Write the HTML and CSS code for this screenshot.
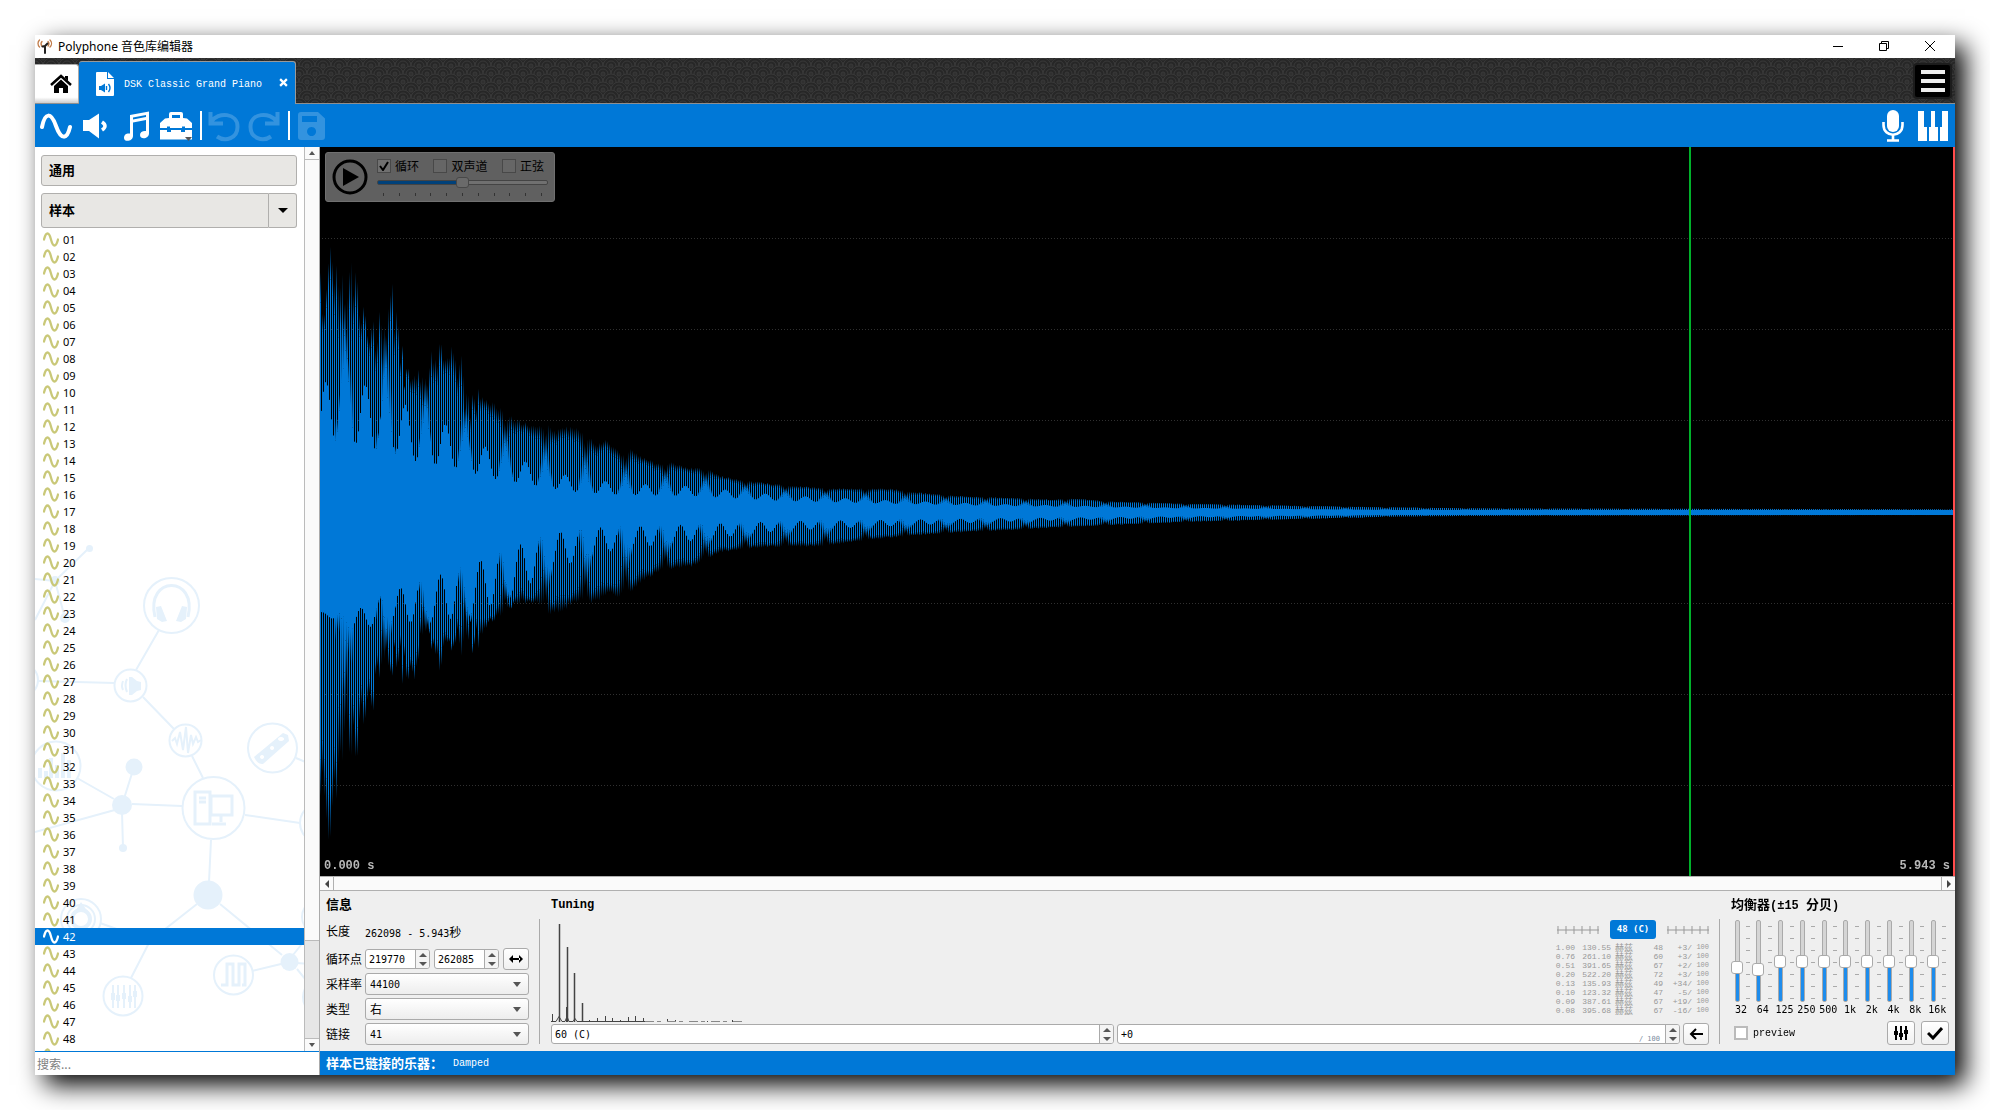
FILE: index.html
```html
<!DOCTYPE html>
<html lang="zh-CN">
<head>
<meta charset="utf-8">
<title>Polyphone 音色库编辑器</title>
<link rel="stylesheet" href="styles.css">
</head>
<body>
<div class="window">
  <header class="titlebar">
    <svg class="app-icon" viewBox="0 0 16 15" fill="none" stroke-linecap="round">
      <path d="M2.500 1C.5 3 .5 6 2.500 8M5 2.500C3.700 4 3.700 5.500 4.800 7M13 1c2 2 2 5 0 7M11 2.500c1.300 1.500 1.300 3 .1 4.500" stroke="#c07b48" stroke-width="1.300"/>
      <path d="M5.500 7.500 8 7l2.500-2.500M8 7v7" stroke="#222" stroke-width="2"/>
    </svg>
    <h1>Polyphone <span class="cjk">音色库编辑器</span></h1>
    <div class="window-buttons">
      <button aria-label="最小化"><svg viewBox="0 0 12 12"><path d="M1 6.500h10"/></svg></button>
      <button aria-label="还原"><svg viewBox="0 0 12 12"><path d="M1.500 3.500h7v7h-7zM3.500 3.500v-2h7v7h-2"/></svg></button>
      <button aria-label="关闭"><svg viewBox="0 0 12 12"><path d="M1 1l10 10M11 1 1 11"/></svg></button>
    </div>
  </header>

  <nav class="tabs">
    <svg class="tabs-pattern" aria-hidden="true">
      <defs>
        <g id="scale" fill="#272727" stroke="#383838"><circle r="8"/><circle r="5"/><circle r="2" fill="#303030"/></g>
        <pattern id="waves" width="16" height="16" patternUnits="userSpaceOnUse">
          <rect width="16" height="16" fill="#272727"/>
          <use href="#scale" x="8"/><use href="#scale" y="8"/><use href="#scale" x="16" y="8"/>
          <use href="#scale" x="8" y="16"/><use href="#scale" y="24"/><use href="#scale" x="16" y="24"/>
        </pattern>
      </defs>
      <rect width="100%" height="100%" fill="url(#waves)"/>
    </svg>
    <button class="tab-home" aria-label="主页">
      <svg viewBox="0 0 22 20"><path d="M1 11 11 2l10 9" fill="none" stroke="#000" stroke-width="2.500"/><path d="M15 2h3v5l-3-3zM4 12l7-6.500 7 6.500v7h-5v-5H9v5H4z"/></svg>
    </button>
    <div class="tab-file">
      <svg class="file-icon" viewBox="0 0 18 24"><path fill="#fff" d="M1 0h10v7h7v16a1 1 0 0 1-1 1H1a1 1 0 0 1-1-1V1a1 1 0 0 1 1-1zM12 0l6 6h-6z"/><path fill="#0078d7" d="M3 14h2l4-2.500v9L5 18H3z"/><path d="M10.500 14v4M12.500 12q3 4 0 8" fill="none" stroke="#0078d7" stroke-width="1.400"/></svg>
      <span>DSK Classic Grand Piano</span>
      <button class="tab-close" aria-label="关闭标签"><svg viewBox="0 0 8 8"><path d="M1 1l6 6M7 1 1 7" stroke="#fff" stroke-width="2"/></svg></button>
    </div>
    <button class="menu" aria-label="菜单"><svg viewBox="0 0 24 22"><path d="M0 2h24M0 11h24M0 20h24" stroke="#eee" stroke-width="4"/></svg></button>
  </nav>

  <div class="toolbar">
    <button aria-label="新建样本"><svg viewBox="0 0 32 32"><path d="M2 17C5 2 11 2 16 16s11 14 14 1" fill="none" stroke="#fff" stroke-width="4" stroke-linecap="round"/></svg></button>
    <button aria-label="新建乐器"><svg viewBox="0 0 32 32"><path fill="#fff" d="M3 10h6l10-6.500v25L9 21H3z"/><path d="M22 12q6 4 0 8" fill="none" stroke="#fff" stroke-width="3.500"/></svg></button>
    <button aria-label="新建预设"><svg viewBox="0 0 32 32"><path fill="#fff" fill-rule="evenodd" d="M10 5 29 1.500v22c0 5.500-9 6.500-9 1.500 0-3 3-4.500 6-4V10l-13 2.500V26c0 5.500-9 6.500-9 2 0-4 3-5 6-4.500zM13 7.500v2L26 7V5z"/></svg></button>
    <button aria-label="工具箱"><svg viewBox="0 0 32 32"><path fill="#fff" fill-rule="evenodd" d="M9 8V4q0-2 2-2h10q2 0 2 2v4l4 .5 5 4.500v5H0v-5L5 8.500zM12 8h8V5h-8zM0 20h7v2h4v-2h10v2h4v-2h7v9.500H0z"/><path d="M7 16.500h3V22H7zM22 16.500h3V22h-3z" fill="#0078d7"/><path d="M25 27h7l-3.500 4z" fill="#555"/></svg></button>
    <span class="tool-sep"></span>
    <button aria-label="撤销" disabled><svg viewBox="0 0 32 32"><path d="M2.500 2v11.500H15M3 12C10 1 30 3 29.500 17c0 11-12 15.500-20.500 9.500" fill="none" stroke="#3393df" stroke-width="4"/></svg></button>
    <button aria-label="重做" disabled><svg viewBox="0 0 32 32"><path d="M29.500 2v11.500H17M29 12C22 1 2 3 2.500 17c0 11 12 15.500 20.500 9.500" fill="none" stroke="#3393df" stroke-width="4"/></svg></button>
    <span class="tool-sep"></span>
    <button aria-label="保存" disabled><svg viewBox="0 0 32 32"><path fill="#3393df" fill-rule="evenodd" d="M5 2h17l7 6.500V27q0 3-3 3H5q-3 0-3-3V5q0-3 3-3zM6 6v6h15V6zM15.500 17a4.500 4.500 0 1 0 .1 0z"/></svg></button>
    <span class="spacer"></span>
    <button aria-label="录音"><svg viewBox="0 0 32 32"><rect x="10" y="0" width="12" height="22" rx="6" fill="#fff"/><path d="M6.500 12v3c0 13 19 13 19 0v-3M16 24v6M10 30.500h12" fill="none" stroke="#fff" stroke-width="2.600"/></svg></button>
    <button aria-label="键盘"><svg viewBox="0 0 32 32"><path fill="#fff" d="M1 1h6v16h3v14H1zM14 1h4v16h3v14h-9V17h2zM25 1h6v30h-8V17h2z"/></svg></button>
  </div>

  <div class="body">
    <aside class="sidebar">
      <div class="tree">
        <svg class="network" viewBox="35 520 270 531" aria-hidden="true" fill="none" stroke="#e5f1fb" stroke-width="2">
          <path d="M89 548 55 581 35 579M55 581 35 620M55 581l10 37M159 630l-23 40M38 681l77 2M143 697l31 32M192 756l11 22M296 758l14 6M132 804l50 2M134 767l-12 38M77 778l37 21M122 808l-87 24M122 812l1 36M245 815l55 8M211 840l-2 42M197 904l-47 37-19 37M220 904l62 51M281 964l-29 7M100 923l50 18M293 955l12-15M297 969l13 16M295 963l15 1"/>
          <circle cx="171.500" cy="605.500" r="27.500"/><circle cx="130.500" cy="685.500" r="16"/><circle cx="22" cy="680" r="16"/><circle cx="185.500" cy="740.500" r="16"/><circle cx="272.500" cy="748" r="24.500"/><circle cx="213.500" cy="808" r="31"/><circle cx="56" cy="766" r="24.500"/><circle cx="320" cy="823" r="20"/><circle cx="123" cy="996" r="19.500"/><circle cx="233.500" cy="975" r="19.500"/><circle cx="81" cy="919" r="20"/><circle cx="81" cy="919" r="14"/><circle cx="81" cy="919" r="9" stroke-width="4"/><circle cx="320" cy="917" r="18"/><circle cx="322" cy="997" r="19"/>
          <g fill="#e5f1fb" stroke="none"><circle cx="89.500" cy="548.500" r="3.500"/><circle cx="55" cy="581" r="5"/><circle cx="65" cy="618" r="5"/><circle cx="134" cy="767" r="8.500"/><circle cx="122" cy="805" r="10"/><circle cx="123" cy="848" r="4"/><circle cx="208" cy="895" r="14.500"/><circle cx="289.500" cy="962" r="9"/>
            <path d="M129 677h3l5 4 4 1v8l-4 1-5 4h-3z"/><path d="M75 912l6-10 7 10zM38 768h4v10h-4zM44 771h4v7h-4zM49 758h4v20h-4zM55 765h4v13h-4zM61 753h4v25h-4zM67 760h4v18h-4z"/>
            <path fill-rule="evenodd" d="M254 757l29-24 5 2 1 6-26 23q-5 1-9-7zM262 755a2 2 0 1 0 .1 0zM272 746a2 2 0 1 0 .1 0zM281 737a3 2 0 1 0 .1 0z"/><path d="M156 607l5-1 6 15-5 1-5-3zM187 607l-5-1-6 15 5 1 5-3z"/>
            <path d="M111 993h4v7h-4zM116 995h4v6h-4zM122 993h4v6h-4zM128 996h4v6h-4zM133 991h4v6h-4z"/></g>
          <path d="M155 617c-10-42 43-42 33 0" stroke-width="3"/><path d="M127 679q-3 6 0 13M123 681q-2 5 0 9"/>
          <path d="M172 741l3-3 2 6 3-12 3 18 3-23 2 26 3-18 2 9 3-7 2 5 3-2"/><path d="M195 792h15v32h-15zM199 798h7M199 802h7M211 796h21v19h-21zM221 816v6M212 824h14" stroke-width="3"/>
          <path d="M221 985h6v-21h6v21h6v-21h6v21h-3" stroke-width="3"/><path d="M113 985v23M118 985v23M124 985v23M130 985v23M135 985v23"/>
        </svg>
        <button class="section">通用</button>
        <div class="section-split"><button class="section">样本</button><button class="section-arrow" aria-label="展开"></button></div>
        <ul class="samples">
          <li>01</li><li>02</li><li>03</li><li>04</li><li>05</li><li>06</li><li>07</li><li>08</li><li>09</li><li>10</li>
          <li>11</li><li>12</li><li>13</li><li>14</li><li>15</li><li>16</li><li>17</li><li>18</li><li>19</li><li>20</li>
          <li>21</li><li>22</li><li>23</li><li>24</li><li>25</li><li>26</li><li>27</li><li>28</li><li>29</li><li>30</li>
          <li>31</li><li>32</li><li>33</li><li>34</li><li>35</li><li>36</li><li>37</li><li>38</li><li>39</li><li>40</li>
          <li>41</li><li class="selected">42</li><li>43</li><li>44</li><li>45</li><li>46</li><li>47</li><li>48</li><li>49</li>
        </ul>
      </div>
      <div class="vscroll"><button class="up" aria-label="向上"></button><div class="vthumb"></div><div class="vtrack"></div><button class="down" aria-label="向下"></button></div>
      <input class="search" type="text" placeholder="搜索..." aria-label="搜索">
    </aside>

    <main class="main">
      <section class="wave">
        <canvas id="waveform"></canvas>
        <span class="marker loop-start"></span>
        <span class="marker loop-end"></span>
        <div class="player">
          <button class="play" aria-label="播放"><svg viewBox="0 0 36 36"><circle cx="18" cy="18" r="16" fill="none" stroke="#000" stroke-width="3"/><path d="M11 9l16 9-16 9z"/></svg></button>
          <div class="player-side">
            <div class="checks">
              <label><input type="checkbox" checked>循环</label>
              <label><input type="checkbox">双声道</label>
              <label><input type="checkbox">正弦</label>
            </div>
            <input class="gain" type="range" min="-50" max="50" value="0" aria-label="增益">
            <div class="gain-ticks"><i></i><i></i><i></i><i></i><i></i><i></i><i></i><i></i><i></i><i></i><i></i></div>
          </div>
        </div>
        <span class="time time-start">0.000 s</span>
        <span class="time time-end">5.943 s</span>
      </section>
      <div class="hscroll"><button class="left" aria-label="向左"></button><div></div><button class="right" aria-label="向右"></button></div>

      <section class="panels">
        <div class="info">
          <h2>信息</h2>
          <div class="row length"><span>长度</span><span class="mono">262098 - 5.943<span class="cjk">秒</span></span></div>
          <div class="row"><label for="loop-a">循环点</label>
            <div class="spin"><input id="loop-a" type="text" value="219770"><div class="arrows"><button aria-label="增加"></button><button aria-label="减少"></button></div></div>
            <div class="spin"><input aria-label="循环终点" type="text" value="262085"><div class="arrows"><button aria-label="增加"></button><button aria-label="减少"></button></div></div>
            <button class="btn" aria-label="全长循环"><svg viewBox="0 0 14 8"><path d="M0 4l4-4v8zM14 4l-4-4v8zM3 3h8v2H3z"/></svg></button>
          </div>
          <div class="row"><label for="rate">采样率</label><select id="rate"><option>44100</option></select></div>
          <div class="row"><label for="type">类型</label><select id="type" class="cjk"><option>右</option></select></div>
          <div class="row"><label for="link">链接</label><select id="link"><option>41</option></select></div>
        </div>

        <div class="tuning">
          <h2 class="mono-title">Tuning</h2>
          <div class="tuning-top">
            <svg class="spectrum" viewBox="0 0 200 100" fill="none" stroke="#444" aria-hidden="true">
              <path d="M8.500 99V1M16.500 99V24M23.500 99V50M31.500 99V80" stroke-width="1.500"/>
              <path d="M1.500 99v-8M15.500 99V84M38.500 99v-2M46.500 99v-4M54.500 99v-6M61.500 99v-4M69.500 99v-2M77.500 99v-5M84.500 99v-6M92.500 99v-4M116.500 99v-3M124.500 99v-2M156.500 99v-1M181.500 99v-2"/>
              <path d="M0 98.500h5l3-5 3 5h3l2-5 2 5h4l2-3 2 3h68"/><path d="M94 98.500h98" stroke-dasharray="9 3 4 6" stroke="#888"/>
            </svg>
            <div class="pitch">
              <div class="pitch-head">
                <svg viewBox="0 0 42 8"><path d="M0 4h42M1 0v8M9 0v8M17 0v8M25 0v8M33 0v8M41 0v8"/></svg>
                <strong>48 (C)</strong>
                <svg viewBox="0 0 42 8"><path d="M0 4h42M1 0v8M9 0v8M17 0v8M25 0v8M33 0v8M41 0v8"/></svg>
              </div>
              <table>
                <tr><td>1.00</td><td>130.55</td><td class="hz">赫兹</td><td>48</td><td>+3/</td><td>100</td></tr>
                <tr><td>0.76</td><td>261.10</td><td class="hz">赫兹</td><td>60</td><td>+3/</td><td>100</td></tr>
                <tr><td>0.51</td><td>391.65</td><td class="hz">赫兹</td><td>67</td><td>+2/</td><td>100</td></tr>
                <tr><td>0.20</td><td>522.20</td><td class="hz">赫兹</td><td>72</td><td>+3/</td><td>100</td></tr>
                <tr><td>0.13</td><td>135.93</td><td class="hz">赫兹</td><td>49</td><td>+34/</td><td>100</td></tr>
                <tr><td>0.10</td><td>123.32</td><td class="hz">赫兹</td><td>47</td><td>-5/</td><td>100</td></tr>
                <tr><td>0.09</td><td>387.61</td><td class="hz">赫兹</td><td>67</td><td>+19/</td><td>100</td></tr>
                <tr><td>0.08</td><td>395.68</td><td class="hz">赫兹</td><td>67</td><td>-16/</td><td>100</td></tr>
              </table>
            </div>
          </div>
          <div class="row tuning-fields">
            <div class="spin"><input type="text" value="60 (C)" aria-label="根音"><div class="arrows"><button aria-label="增加"></button><button aria-label="减少"></button></div></div>
            <div class="spin"><input type="text" value="+0" aria-label="微调"><span class="suffix">/ 100</span><div class="arrows"><button aria-label="增加"></button><button aria-label="减少"></button></div></div>
            <button class="btn" aria-label="应用"><svg viewBox="0 0 14 12"><path d="M7 1 2 6l5 5M2 6h12" fill="none" stroke="#000" stroke-width="2"/></svg></button>
          </div>
        </div>

        <div class="eq">
          <h2>均衡器<span class="mono-title">(±15 </span>分贝<span class="mono-title">)</span></h2>
          <div class="bands">
            <div class="band"><input id="b0" type="range" min="-15" max="15" value="-3" style="--fill:40%"><label for="b0">32</label></div>
            <div class="band"><input id="b1" type="range" min="-15" max="15" value="-4" style="--fill:37%"><label for="b1">64</label></div>
            <div class="band"><input id="b2" type="range" min="-15" max="15" value="0"><label for="b2">125</label></div>
            <div class="band"><input id="b3" type="range" min="-15" max="15" value="0"><label for="b3">250</label></div>
            <div class="band"><input id="b4" type="range" min="-15" max="15" value="0"><label for="b4">500</label></div>
            <div class="band"><input id="b5" type="range" min="-15" max="15" value="0"><label for="b5">1k</label></div>
            <div class="band"><input id="b6" type="range" min="-15" max="15" value="0"><label for="b6">2k</label></div>
            <div class="band"><input id="b7" type="range" min="-15" max="15" value="0"><label for="b7">4k</label></div>
            <div class="band"><input id="b8" type="range" min="-15" max="15" value="0"><label for="b8">8k</label></div>
            <div class="band"><input id="b9" type="range" min="-15" max="15" value="0"><label for="b9">16k</label></div>
          </div>
          <div class="eq-foot">
            <label class="preview"><input type="checkbox">preview</label>
            <button class="btn" aria-label="重置"><svg viewBox="0 0 16 14"><path d="M3 0v14M8 0v14M13 0v14" stroke="#000" stroke-width="2"/><path d="M1 5h4v4H1zM6 7h4v4H6zM11 4h4v4h-4z"/></svg></button>
            <button class="btn" aria-label="应用均衡"><svg viewBox="0 0 16 14"><path d="M1 7l5 5 9-10" fill="none" stroke="#000" stroke-width="3"/></svg></button>
          </div>
        </div>
      </section>
      <footer class="status"><strong>样本已链接的乐器：</strong><span>Damped</span></footer>
    </main>
  </div>
</div>
<script src="waveform.js"></script>
</body>
</html>
```
FILE: styles.css
```css
* { box-sizing: border-box; }
body { margin: 0; padding: 35px; background: #fff; color: #000; font: 12px "Noto Sans CJK SC", sans-serif; overflow: hidden; }
button { margin: 0; padding: 0; border: 0; background: none; color: inherit; font: inherit; display: flex; align-items: center; justify-content: center; flex: none; }
svg { display: block; }
input, select { font: inherit; margin: 0; }
h1, h2 { margin: 0; }

.window { display: flex; flex-direction: column; height: calc(100vh - 70px); background: #fff; box-shadow: 10px 10px 24px #000; }
.titlebar { display: flex; align-items: center; height: 23px; flex: none; }
.app-icon { width: 16px; height: 15px; margin-left: 2px; }
h1 { flex: 1; margin-left: 5px; font: 12px/20px "Noto Sans", sans-serif; }
h1 .cjk { font: 12px "Noto Sans CJK SC", sans-serif; }
.window-buttons { display: flex; gap: 34px; padding: 0 19px 2px 0; }
.window-buttons svg { width: 12px; height: 12px; fill: none; stroke: #000; }

.tabs { position: relative; display: flex; align-items: flex-end; height: 46px; flex: none; border-bottom: 1px solid #8f8f8f; }
.tabs-pattern { position: absolute; inset: 0; width: 100%; height: 100%; }
.tab-home { position: relative; width: 44px; height: 39px; border: 1px solid #aaa; border-left: 0; border-bottom: 0; border-radius: 0 3px 0 0; background: linear-gradient(#fff 85%, #ccc); padding-left: 8px; }
.tab-home svg { width: 24px; height: 20px; }
.tab-file { position: relative; display: flex; align-items: center; width: 217px; height: 43px; margin-bottom: -1px; padding: 2px 7px 0 17px; background: #0078d7; border: 1px solid #999; border-width: 1px 1px 0 0; border-radius: 3px 3px 0 0; color: #fff; }
.file-icon { width: 18px; height: 24px; }
.tab-file span { flex: 1; margin-left: 10px; font: 10px "Liberation Mono", monospace; white-space: nowrap; }
.tab-close svg { width: 9px; height: 9px; margin-bottom: 3px; }
.menu { position: relative; width: 39px; height: 36px; margin: 0 3px 4px auto; border: 2px solid #1c1c1c; border-radius: 4px; background: #000; }
.menu svg { width: 24px; height: 22px; }

.toolbar { display: flex; align-items: center; gap: 8px; height: 43px; flex: none; padding: 0 6px 0 5px; background: #0078d7; }
.toolbar svg { width: 32px; height: 32px; }
.tool-sep { width: 2px; height: 29px; margin: 0 -2px 0 0; background: #fff; }
.spacer { flex: 1; }

.body { display: flex; flex: 1; min-height: 0; }
.sidebar { display: grid; grid-template: minmax(0, 1fr) 24px / minmax(0, 1fr) 14px; width: 285px; flex: none; border-right: 1px solid #aaa; }
.tree { position: relative; overflow: hidden; padding: 8px 7px 0 6px; border-right: 1px solid #bbb; }
.network { position: absolute; left: 0; bottom: 0; width: 270px; height: 531px; }
.section { position: relative; width: 100%; height: 31px; padding: 0 0 2px 7px; justify-content: flex-start; border: 1px solid #b0afad; border-radius: 3px; background: #e8e7e4; font-size: 13px; font-weight: 700; }
.section-split { position: relative; display: flex; height: 35px; margin: 7px 0 3px; }
.section-split .section { flex: 1; height: 35px; border-radius: 3px 0 0 3px; }
.section-arrow { width: 28px; border: 1px solid #b0afad; border-left: 0; border-radius: 0 3px 3px 0; background: #e8e7e4; }
.section-arrow::before { content: ""; border: 5px solid transparent; border-top: 5px solid #000; border-bottom: 0; }
.samples { position: relative; list-style: none; margin: 0 -7px 0 -6px; padding: 0; font: 11px/17px "Noto Sans", sans-serif; }
.samples li { height: 17px; padding-left: 28px; background: 8px 1px / 16px 15px no-repeat url("data:image/svg+xml,%3Csvg xmlns='http://www.w3.org/2000/svg' viewBox='0 0 16 15'%3E%3Cpath d='M1 7.500C3-.5 6-.5 8 7.500s5 8 7 0' fill='none' stroke='%23c9c878' stroke-width='2.300' stroke-linecap='round'/%3E%3C/svg%3E"); }
.samples .selected { color: #fff; background-color: #0078d7; background-image: url("data:image/svg+xml,%3Csvg xmlns='http://www.w3.org/2000/svg' viewBox='0 0 16 15'%3E%3Cpath d='M1 7.500C3-.5 6-.5 8 7.500s5 8 7 0' fill='none' stroke='white' stroke-width='2.300' stroke-linecap='round'/%3E%3C/svg%3E"); }
.vscroll { display: flex; flex-direction: column; background: #fafafa; }
.vscroll button { height: 13px; border-bottom: 1px solid #bbb; }
.vscroll .down { border: 0; border-top: 1px solid #bbb; }
.vthumb { flex: 785; background: #fafafa; border-bottom: 1px solid #bbb; }
.vtrack { flex: 98; background: #e6e6e6; }
.up::before, .down::before { content: ""; border: 3px solid transparent; border-bottom: 4px solid #555; border-top: 0; }
.down::before { border-top: 4px solid #555; border-bottom: 0; }
.search { grid-column: 1 / 3; width: 100%; border: 0; border-top: 1px solid #0078d7; padding: 0 2px; outline: 0; }
.search::placeholder { color: #808080; }

.main { display: flex; flex-direction: column; flex: 1; min-width: 0; }
.wave { position: relative; flex: 1; min-height: 0; background: #000; overflow: hidden; }
.wave canvas { display: block; width: 100%; height: 100%; }
.marker { position: absolute; top: 0; bottom: 0; width: 2px; background: #00b12a; }
.loop-start { left: 83.75%; }
.loop-end { right: 0; background: #ff4c4c; }
.time { position: absolute; bottom: 2px; color: #b8b8b8; font: bold 12px/16px "Liberation Mono", monospace; }
.time-start { left: 4px; }
.time-end { right: 5px; }
.player { position: absolute; left: 5px; top: 5px; display: flex; gap: 9px; width: 230px; height: 50px; padding: 6px; border: 1px solid #707070; border-radius: 3px; background: #606060; font-size: 12px; }
.play svg { width: 36px; height: 36px; }
.player-side { flex: 1; }
.checks { display: flex; justify-content: space-between; height: 14px; padding-right: 4px; }
.checks label { display: flex; align-items: center; gap: 4px; line-height: 14px; }
input[type=checkbox] { appearance: none; width: 14px; height: 14px; border: 2px solid #bbb; background: #fff; }
.checks input[type=checkbox] { border: 1px solid #484848; background: #666; }
.checks input[type=checkbox]:checked { background: center / 10px 10px no-repeat #707070 url("data:image/svg+xml,%3Csvg xmlns='http://www.w3.org/2000/svg' viewBox='0 0 10 10'%3E%3Cpath d='M1 5l3 4 5-8' fill='none' stroke='black' stroke-width='2'/%3E%3C/svg%3E"); }
input[type=range] { appearance: none; background: none; display: block; }
.gain { width: 100%; height: 13px; margin-top: 3px; }
.gain::-webkit-slider-runnable-track { height: 5px; border: 1px solid #444; border-radius: 2px; background: linear-gradient(90deg, #00417a 50%, #707070 50%); }
.gain::-webkit-slider-thumb { appearance: none; width: 13px; height: 11px; margin-top: -4px; border: 1px solid #484848; border-radius: 3px; background: #6a6a6a; }
.gain-ticks { display: flex; justify-content: space-between; padding: 4px 6px 0; }
.gain-ticks i { width: 1px; height: 3px; background: #333; }

.hscroll { display: flex; height: 15px; flex: none; border: 1px solid #b0b0b0; border-width: 1px 0; background: #fafafa; }
.hscroll div { flex: 1; }
.hscroll button { width: 14px; border-right: 1px solid #b0b0b0; }
.hscroll .right { border: 0; border-left: 1px solid #b0b0b0; }
.left::before, .right::before { content: ""; border: 4px solid transparent; border-right-color: #444; border-left: 0; }
.right::before { border-left: 4px solid #444; border-right: 0; }

.panels { display: flex; height: 160px; flex: none; background: #efefef; }
.panels h2 { height: 25px; font-size: 13px; line-height: 25px; white-space: nowrap; }
.panels .mono-title { font-family: "Liberation Mono", monospace; font-size: 12px; }
.cjk { font: 12px "Noto Sans CJK SC", sans-serif; }
.mono, .spin, select, .band { font: 10px "DejaVu Sans Mono", monospace; }
.info { width: 209px; padding: 0 0 0 6px; }
.row { display: flex; align-items: center; gap: 4px; height: 22px; margin-bottom: 3px; }
.row.length { height: 30px; margin-bottom: 2px; }
.info .row > :first-child { width: 35px; flex: none; line-height: 20px; white-space: nowrap; }
.info .row { width: 203px; }
.spin { display: flex; flex: 1; min-width: 0; height: 20px; border: 1px solid #aaa; border-radius: 3px; background: #fff; overflow: hidden; }
.spin input { flex: 1; width: 0; min-width: 0; border: 0; outline: 0; padding: 0 3px; background: none; }
.arrows { display: flex; flex-direction: column; width: 14px; border-left: 1px solid #aaa; background: #f4f4f4; }
.arrows button { flex: 1; }
.arrows button::before { content: ""; border: 4px solid transparent; border-bottom: 4px solid #555; border-top: 0; }
.arrows button + button::before { border-top: 4px solid #555; border-bottom: 0; }
.suffix { align-self: flex-end; margin-right: 5px; color: #7a8ca0; font-size: 7px; }
.btn { width: 26px; height: 22px; border: 1px solid #aaa; border-radius: 3px; background: linear-gradient(#fff, #f0f0f0); }
.btn svg { width: 14px; height: 12px; }
select { appearance: none; flex: 1; height: 22px; padding: 0 4px; border: 1px solid #aaa; border-radius: 3px; color: #000; background: right 7px center / 8px 5px no-repeat url("data:image/svg+xml,%3Csvg xmlns='http://www.w3.org/2000/svg' viewBox='0 0 8 5'%3E%3Cpath d='M0 0h8L4 5z' fill='%23555'/%3E%3C/svg%3E"), linear-gradient(#fff, #ededed); }
select.cjk { font: 12px/18px "Noto Sans CJK SC", sans-serif; }

.tuning, .eq { position: relative; flex: 1; min-width: 0; padding-left: 22px; }
.tuning::before, .eq::before { content: ""; position: absolute; left: 10px; top: 28px; bottom: 7px; width: 1px; background: #aaa; }
.tuning h2 { line-height: 28px; }
.tuning-top { display: flex; justify-content: space-between; height: 107px; }
.spectrum { width: 200px; height: 100px; margin-top: 7px; }
.pitch { width: 154px; padding-top: 4px; }
.pitch-head { display: flex; align-items: center; justify-content: space-between; padding-left: 2px; }
.pitch-head svg { width: 42px; height: 8px; stroke: #999; }
.pitch-head strong { width: 46px; border-radius: 3px; background: #0078d7; color: #fff; font: bold 9px/19px "DejaVu Sans Mono", monospace; text-align: center; }
table { width: 100%; margin-top: 4px; border-collapse: collapse; table-layout: fixed; color: #999; }
td { height: 9px; padding: 0; font: 8px/9px "Liberation Mono", monospace; text-align: right; white-space: nowrap; }
td:first-child { width: 20px; }
td:nth-child(2) { width: 36px; }
td.hz { width: 22px; font: 9px/9px "Noto Sans CJK SC", sans-serif; }
td:nth-child(4) { width: 30px; }
td:nth-child(5) { width: 29px; }
td:last-child { font-size: 7px; }
.tuning-fields { gap: 3px; }
.tuning-fields .spin { flex: 565; }

.eq { flex: none; width: 246px; padding: 0 6px 0 22px; }
.bands { display: flex; height: 95px; margin-top: 4px; }
.band { width: 22px; display: flex; flex-direction: column; background: repeating-linear-gradient(#aaa 0 1px, transparent 1px 12px) 15px 6px / 4px 73px no-repeat; }
.band input { writing-mode: vertical-lr; direction: rtl; width: 12px; height: 82px; flex: none; }
.band label { width: 22px; margin-left: -1px; line-height: 16px; text-align: center; }
.band input::-webkit-slider-runnable-track { width: 5px; border: 1px solid #aaa; border-radius: 2px; background: linear-gradient(0deg, #1e8cec var(--fill, 50%), #d5d5d5 var(--fill, 50%)); }
.band input::-webkit-slider-thumb { appearance: none; width: 12px; height: 13px; margin-left: -5px; border: 1px solid #aaa; border-radius: 3px; background: #fff; }
.eq-foot { display: flex; align-items: center; gap: 6px; height: 28px; margin-top: 4px; }
.preview { display: flex; align-items: center; gap: 5px; flex: 1; padding-left: 3px; font: 10px "Liberation Mono", monospace; }
.eq-foot .btn { width: 28px; height: 24px; }
.eq-foot svg { width: 16px; height: 14px; }

.status { display: flex; align-items: center; gap: 10px; height: 24px; flex: none; padding-left: 6px; background: #0078d7; color: #fff; }
.status strong { font-size: 13px; line-height: 20px; }
.status span { font: 10px "Liberation Mono", monospace; }
```
FILE: waveform.js
```js
// Envelope control points: [position, offset from the centre line], on a 1635 x 729 view.
const upper = [0,226, 14,262, 22,256, 32,254, 38,215, 41,222, 48,200, 56,192, 58,215, 64,220, 72,220, 78,202, 83,155, 94,130, 100,150, 113,162, 122,162, 132,164, 140,152, 147,130, 151,112, 160,119, 180,105, 190,97, 210,88, 225,90, 235,82, 252,88, 262,82, 277,68, 286,74, 300,59, 310,64, 322,56, 335,50, 352,50, 370,45, 385,45, 400,37, 420,33, 460,28, 510,24, 570,24, 590,21, 630,17, 680,15, 730,13, 755,14, 790,11, 860,9, 960,7, 1080,5, 1180,4, 1635,3];
const lower = [0,268, 4,340, 8,325, 11,300, 15,310, 20,275, 25,273, 30,250, 40,228, 45,220, 53,203, 58,180, 64,175, 72,158, 80,165, 84,175, 91,162, 96,158, 100,140, 110,133, 117,158, 125,138, 152,136, 160,128, 170,112, 190,98, 200,92, 215,93, 230,104, 245,98, 260,90, 275,92, 287,83, 300,86, 312,80, 325,68, 345,58, 370,56, 400,41, 440,36, 500,35, 550,28, 620,22, 680,19, 780,14, 880,10, 960,8, 1080,5, 1180,4, 1635,3];
const innerUpper = [0,90, 20,115, 45,95, 70,90, 100,72, 130,66, 170,48, 210,38, 250,28, 300,23, 370,21, 460,14, 570,10, 680,7, 860,4, 1080,2, 1635,2];
const innerLower = [0,100, 30,110, 70,95, 110,88, 150,78, 190,60, 230,40, 280,28, 380,20, 460,14, 570,11, 680,8, 860,5, 1080,3, 1635,3];

function at(points, x) {
  for (let i = 2; i < points.length; i += 2) {
    if (x <= points[i]) {
      const t = (x - points[i - 2]) / (points[i] - points[i - 2]);
      return points[i - 1] + t * (points[i + 1] - points[i - 1]);
    }
  }
  return points[points.length - 1];
}

function noise(n) {
  const s = Math.sin(n * 127.1) * 43758.5453;
  return s - Math.floor(s);
}

function draw() {
  const canvas = document.getElementById("waveform");
  const width = canvas.width = canvas.clientWidth;
  const height = canvas.height = canvas.clientHeight;
  const g = canvas.getContext("2d");
  const mid = Math.round(height / 2);
  const scaleY = height / 729;

  g.fillStyle = "#303030";
  for (let i = 1; i < 8; i++) {
    for (let x = 2; x < width; x += 3) g.fillRect(x, Math.round(height * i / 8), 1, 1);
  }

  function half(col, sign, core, edge, weight) {
    const start = core * scaleY, end = Math.max(edge, core) * scaleY;
    const solid = start + (end - start) * Math.min(0.8, Math.max(0, weight - 0.5));
    const tip = start + (end - start) * Math.min(1, Math.max(0, weight));
    g.fillStyle = "#0078d7";
    g.fillRect(col, sign < 0 ? mid - solid : mid, 1, solid);
    if (tip - solid < 0.5) return;
    const fade = g.createLinearGradient(0, mid + sign * solid, 0, mid + sign * tip);
    fade.addColorStop(0, "#0078d7");
    fade.addColorStop(1, "rgba(0,120,215,0)");
    g.fillStyle = fade;
    g.fillRect(col, sign < 0 ? mid - tip : mid + solid, 1, tip - solid);
  }

  for (let col = 0; col < width; col++) {
    const x = col * 1635 / width;
    const early = Math.max(0, 1 - x / 180);
    const beat = Math.cos(Math.PI * col) * Math.cos(Math.PI * (x - 5) / 40);
    const weight = 0.72 + beat * 1.2 + (noise(col + 9) - 0.5) * 0.7 * early;
    const rough = x < 160 ? 1.06 - noise(col) * 0.25 : 1 - noise(col) * 0.05;
    const calm = Math.max(0, 1 - x / 1100);
    const lobeUp = 1 + 0.35 * calm * Math.cos(Math.PI * (x - 285) / 10);
    const lobeDown = 1 + 0.6 * calm * Math.cos(Math.PI * (x - 250) / 10) * Math.min(1, x / 240);
    half(col, -1, at(innerUpper, x) * lobeUp, at(upper, x) * rough, weight);
    half(col, 1, at(innerLower, x) * lobeDown, at(lower, x) * rough, weight);
  }
}

draw();
window.addEventListener("resize", draw);
```
